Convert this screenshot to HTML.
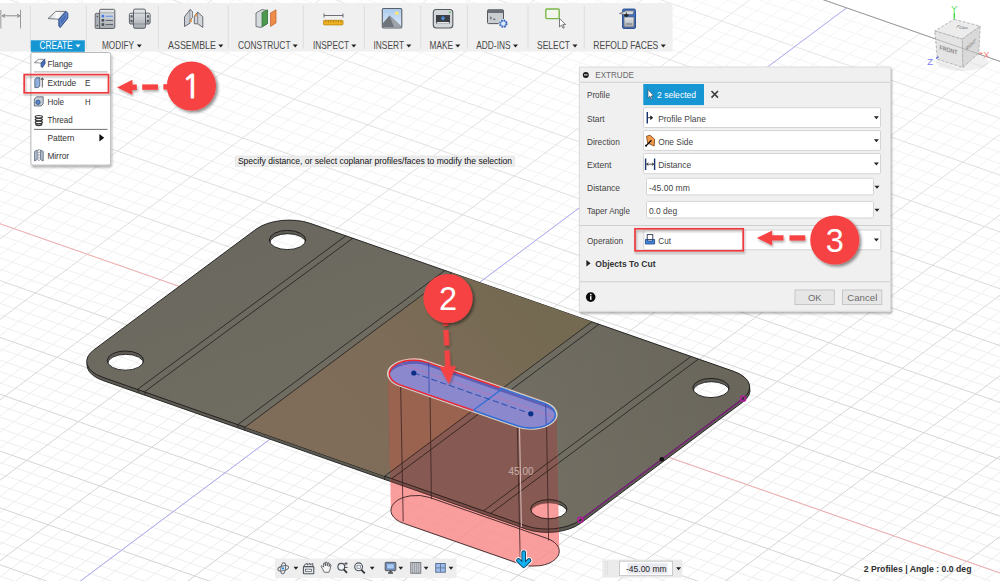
<!DOCTYPE html>
<html><head><meta charset="utf-8"><title>Extrude cut</title>
<style>
html,body{margin:0;padding:0;background:#fff;overflow:hidden}
svg{display:block;font-family:"Liberation Sans",sans-serif}
</style></head><body>
<svg width="1000" height="581" viewBox="0 0 1000 581">
<rect width="1000" height="581" fill="#ffffff"/>
<g stroke="#ededed" stroke-width="1" fill="none"><path d="M-1356.34 545.82 L-164.94 -345.43"/><path d="M-1360.64 532.95 L691.76 1249.75"/><path d="M-1341.68 550.94 L-150.28 -340.31"/><path d="M-1350.28 525.2 L702.12 1242"/><path d="M-1327.02 556.06 L-135.62 -335.19"/><path d="M-1339.92 517.45 L712.48 1234.25"/><path d="M-1312.36 561.18 L-120.96 -330.07"/><path d="M-1329.56 509.7 L722.84 1226.5"/><path d="M-1283.04 571.42 L-91.64 -319.83"/><path d="M-1308.84 494.2 L743.56 1211"/><path d="M-1268.38 576.54 L-76.98 -314.71"/><path d="M-1298.48 486.45 L753.92 1203.25"/><path d="M-1253.72 581.66 L-62.32 -309.59"/><path d="M-1288.12 478.7 L764.28 1195.5"/><path d="M-1239.06 586.78 L-47.66 -304.47"/><path d="M-1277.76 470.95 L774.64 1187.75"/><path d="M-1209.74 597.02 L-18.34 -294.23"/><path d="M-1257.04 455.45 L795.36 1172.25"/><path d="M-1195.08 602.14 L-3.68 -289.11"/><path d="M-1246.68 447.7 L805.72 1164.5"/><path d="M-1180.42 607.26 L10.98 -283.99"/><path d="M-1236.32 439.95 L816.08 1156.75"/><path d="M-1165.76 612.38 L25.64 -278.87"/><path d="M-1225.96 432.2 L826.44 1149"/><path d="M-1136.44 622.62 L54.96 -268.63"/><path d="M-1205.24 416.7 L847.16 1133.5"/><path d="M-1121.78 627.74 L69.62 -263.51"/><path d="M-1194.88 408.95 L857.52 1125.75"/><path d="M-1107.12 632.86 L84.28 -258.39"/><path d="M-1184.52 401.2 L867.88 1118"/><path d="M-1092.46 637.98 L98.94 -253.27"/><path d="M-1174.16 393.45 L878.24 1110.25"/><path d="M-1063.14 648.22 L128.26 -243.03"/><path d="M-1153.44 377.95 L898.96 1094.75"/><path d="M-1048.48 653.34 L142.92 -237.91"/><path d="M-1143.08 370.2 L909.32 1087"/><path d="M-1033.82 658.46 L157.58 -232.79"/><path d="M-1132.72 362.45 L919.68 1079.25"/><path d="M-1019.16 663.58 L172.24 -227.67"/><path d="M-1122.36 354.7 L930.04 1071.5"/><path d="M-989.84 673.82 L201.56 -217.43"/><path d="M-1101.64 339.2 L950.76 1056"/><path d="M-975.18 678.94 L216.22 -212.31"/><path d="M-1091.28 331.45 L961.12 1048.25"/><path d="M-960.52 684.06 L230.88 -207.19"/><path d="M-1080.92 323.7 L971.48 1040.5"/><path d="M-945.86 689.18 L245.54 -202.07"/><path d="M-1070.56 315.95 L981.84 1032.75"/><path d="M-916.54 699.42 L274.86 -191.83"/><path d="M-1049.84 300.45 L1002.56 1017.25"/><path d="M-901.88 704.54 L289.52 -186.71"/><path d="M-1039.48 292.7 L1012.92 1009.5"/><path d="M-887.22 709.66 L304.18 -181.59"/><path d="M-1029.12 284.95 L1023.28 1001.75"/><path d="M-872.56 714.78 L318.84 -176.47"/><path d="M-1018.76 277.2 L1033.64 994"/><path d="M-843.24 725.02 L348.16 -166.23"/><path d="M-998.04 261.7 L1054.36 978.5"/><path d="M-828.58 730.14 L362.82 -161.11"/><path d="M-987.68 253.95 L1064.72 970.75"/><path d="M-813.92 735.26 L377.48 -155.99"/><path d="M-977.32 246.2 L1075.08 963"/><path d="M-799.26 740.38 L392.14 -150.87"/><path d="M-966.96 238.45 L1085.44 955.25"/><path d="M-769.94 750.62 L421.46 -140.63"/><path d="M-946.24 222.95 L1106.16 939.75"/><path d="M-755.28 755.74 L436.12 -135.51"/><path d="M-935.88 215.2 L1116.52 932"/><path d="M-740.62 760.86 L450.78 -130.39"/><path d="M-925.52 207.45 L1126.88 924.25"/><path d="M-725.96 765.98 L465.44 -125.27"/><path d="M-915.16 199.7 L1137.24 916.5"/><path d="M-696.64 776.22 L494.76 -115.03"/><path d="M-894.44 184.2 L1157.96 901"/><path d="M-681.98 781.34 L509.42 -109.91"/><path d="M-884.08 176.45 L1168.32 893.25"/><path d="M-667.32 786.46 L524.08 -104.79"/><path d="M-873.72 168.7 L1178.68 885.5"/><path d="M-652.66 791.58 L538.74 -99.67"/><path d="M-863.36 160.95 L1189.04 877.75"/><path d="M-623.34 801.82 L568.06 -89.43"/><path d="M-842.64 145.45 L1209.76 862.25"/><path d="M-608.68 806.94 L582.72 -84.31"/><path d="M-832.28 137.7 L1220.12 854.5"/><path d="M-594.02 812.06 L597.38 -79.19"/><path d="M-821.92 129.95 L1230.48 846.75"/><path d="M-579.36 817.18 L612.04 -74.07"/><path d="M-811.56 122.2 L1240.84 839"/><path d="M-550.04 827.42 L641.36 -63.83"/><path d="M-790.84 106.7 L1261.56 823.5"/><path d="M-535.38 832.54 L656.02 -58.71"/><path d="M-780.48 98.95 L1271.92 815.75"/><path d="M-520.72 837.66 L670.68 -53.59"/><path d="M-770.12 91.2 L1282.28 808"/><path d="M-506.06 842.78 L685.34 -48.47"/><path d="M-759.76 83.45 L1292.64 800.25"/><path d="M-476.74 853.02 L714.66 -38.23"/><path d="M-739.04 67.95 L1313.36 784.75"/><path d="M-462.08 858.14 L729.32 -33.11"/><path d="M-728.68 60.2 L1323.72 777"/><path d="M-447.42 863.26 L743.98 -27.99"/><path d="M-718.32 52.45 L1334.08 769.25"/><path d="M-432.76 868.38 L758.64 -22.87"/><path d="M-707.96 44.7 L1344.44 761.5"/><path d="M-403.44 878.62 L787.96 -12.63"/><path d="M-687.24 29.2 L1365.16 746"/><path d="M-388.78 883.74 L802.62 -7.51"/><path d="M-676.88 21.45 L1375.52 738.25"/><path d="M-374.12 888.86 L817.28 -2.39"/><path d="M-666.52 13.7 L1385.88 730.5"/><path d="M-359.46 893.98 L831.94 2.73"/><path d="M-656.16 5.95 L1396.24 722.75"/><path d="M-330.14 904.22 L861.26 12.97"/><path d="M-635.44 -9.55 L1416.96 707.25"/><path d="M-315.48 909.34 L875.92 18.09"/><path d="M-625.08 -17.3 L1427.32 699.5"/><path d="M-300.82 914.46 L890.58 23.21"/><path d="M-614.72 -25.05 L1437.68 691.75"/><path d="M-286.16 919.58 L905.24 28.33"/><path d="M-604.36 -32.8 L1448.04 684"/><path d="M-256.84 929.82 L934.56 38.57"/><path d="M-583.64 -48.3 L1468.76 668.5"/><path d="M-242.18 934.94 L949.22 43.69"/><path d="M-573.28 -56.05 L1479.12 660.75"/><path d="M-227.52 940.06 L963.88 48.81"/><path d="M-562.92 -63.8 L1489.48 653"/><path d="M-212.86 945.18 L978.54 53.93"/><path d="M-552.56 -71.55 L1499.84 645.25"/><path d="M-183.54 955.42 L1007.86 64.17"/><path d="M-531.84 -87.05 L1520.56 629.75"/><path d="M-168.88 960.54 L1022.52 69.29"/><path d="M-521.48 -94.8 L1530.92 622"/><path d="M-154.22 965.66 L1037.18 74.41"/><path d="M-511.12 -102.55 L1541.28 614.25"/><path d="M-139.56 970.78 L1051.84 79.53"/><path d="M-500.76 -110.3 L1551.64 606.5"/><path d="M-110.24 981.02 L1081.16 89.77"/><path d="M-480.04 -125.8 L1572.36 591"/><path d="M-95.58 986.14 L1095.82 94.89"/><path d="M-469.68 -133.55 L1582.72 583.25"/><path d="M-80.92 991.26 L1110.48 100.01"/><path d="M-459.32 -141.3 L1593.08 575.5"/><path d="M-66.26 996.38 L1125.14 105.13"/><path d="M-448.96 -149.05 L1603.44 567.75"/><path d="M-36.94 1006.62 L1154.46 115.37"/><path d="M-428.24 -164.55 L1624.16 552.25"/><path d="M-22.28 1011.74 L1169.12 120.49"/><path d="M-417.88 -172.3 L1634.52 544.5"/><path d="M-7.62 1016.86 L1183.78 125.61"/><path d="M-407.52 -180.05 L1644.88 536.75"/><path d="M7.04 1021.98 L1198.44 130.73"/><path d="M-397.16 -187.8 L1655.24 529"/><path d="M36.36 1032.22 L1227.76 140.97"/><path d="M-376.44 -203.3 L1675.96 513.5"/><path d="M51.02 1037.34 L1242.42 146.09"/><path d="M-366.08 -211.05 L1686.32 505.75"/><path d="M65.68 1042.46 L1257.08 151.21"/><path d="M-355.72 -218.8 L1696.68 498"/><path d="M80.34 1047.58 L1271.74 156.33"/><path d="M-345.36 -226.55 L1707.04 490.25"/><path d="M109.66 1057.82 L1301.06 166.57"/><path d="M-324.64 -242.05 L1727.76 474.75"/><path d="M124.32 1062.94 L1315.72 171.69"/><path d="M-314.28 -249.8 L1738.12 467"/><path d="M138.98 1068.06 L1330.38 176.81"/><path d="M-303.92 -257.55 L1748.48 459.25"/><path d="M153.64 1073.18 L1345.04 181.93"/><path d="M-293.56 -265.3 L1758.84 451.5"/><path d="M182.96 1083.42 L1374.36 192.17"/><path d="M-272.84 -280.8 L1779.56 436"/><path d="M197.62 1088.54 L1389.02 197.29"/><path d="M-262.48 -288.55 L1789.92 428.25"/><path d="M212.28 1093.66 L1403.68 202.41"/><path d="M-252.12 -296.3 L1800.28 420.5"/><path d="M226.94 1098.78 L1418.34 207.53"/><path d="M-241.76 -304.05 L1810.64 412.75"/><path d="M256.26 1109.02 L1447.66 217.77"/><path d="M-221.04 -319.55 L1831.36 397.25"/><path d="M270.92 1114.14 L1462.32 222.89"/><path d="M-210.68 -327.3 L1841.72 389.5"/><path d="M285.58 1119.26 L1476.98 228.01"/><path d="M-200.32 -335.05 L1852.08 381.75"/><path d="M300.24 1124.38 L1491.64 233.13"/><path d="M-189.96 -342.8 L1862.44 374"/><path d="M329.56 1134.62 L1520.96 243.37"/><path d="M344.22 1139.74 L1535.62 248.49"/><path d="M358.88 1144.86 L1550.28 253.61"/><path d="M373.54 1149.98 L1564.94 258.73"/><path d="M402.86 1160.22 L1594.26 268.97"/><path d="M417.52 1165.34 L1608.92 274.09"/><path d="M432.18 1170.46 L1623.58 279.21"/><path d="M446.84 1175.58 L1638.24 284.33"/><path d="M476.16 1185.82 L1667.56 294.57"/><path d="M490.82 1190.94 L1682.22 299.69"/><path d="M505.48 1196.06 L1696.88 304.81"/><path d="M520.14 1201.18 L1711.54 309.93"/><path d="M549.46 1211.42 L1740.86 320.17"/><path d="M564.12 1216.54 L1755.52 325.29"/><path d="M578.78 1221.66 L1770.18 330.41"/><path d="M593.44 1226.78 L1784.84 335.53"/><path d="M622.76 1237.02 L1814.16 345.77"/><path d="M637.42 1242.14 L1828.82 350.89"/><path d="M652.08 1247.26 L1843.48 356.01"/><path d="M666.74 1252.38 L1858.14 361.13"/></g>
<g stroke="#d3d3d3" stroke-width="1" fill="none"><path d="M-1371 540.7 L-179.6 -350.55"/><path d="M-1371 540.7 L681.4 1257.5"/><path d="M-1297.7 566.3 L-106.3 -324.95"/><path d="M-1319.2 501.95 L733.2 1218.75"/><path d="M-1224.4 591.9 L-33 -299.35"/><path d="M-1267.4 463.2 L785 1180"/><path d="M-1151.1 617.5 L40.3 -273.75"/><path d="M-1215.6 424.45 L836.8 1141.25"/><path d="M-1077.8 643.1 L113.6 -248.15"/><path d="M-1163.8 385.7 L888.6 1102.5"/><path d="M-1004.5 668.7 L186.9 -222.55"/><path d="M-1112 346.95 L940.4 1063.75"/><path d="M-931.2 694.3 L260.2 -196.95"/><path d="M-1060.2 308.2 L992.2 1025"/><path d="M-857.9 719.9 L333.5 -171.35"/><path d="M-1008.4 269.45 L1044 986.25"/><path d="M-784.6 745.5 L406.8 -145.75"/><path d="M-956.6 230.7 L1095.8 947.5"/><path d="M-711.3 771.1 L480.1 -120.15"/><path d="M-904.8 191.95 L1147.6 908.75"/><path d="M-638 796.7 L553.4 -94.55"/><path d="M-853 153.2 L1199.4 870"/><path d="M-564.7 822.3 L626.7 -68.95"/><path d="M-801.2 114.45 L1251.2 831.25"/><path d="M-491.4 847.9 L700 -43.35"/><path d="M-749.4 75.7 L1303 792.5"/><path d="M-418.1 873.5 L773.3 -17.75"/><path d="M-697.6 36.95 L1354.8 753.75"/><path d="M-344.8 899.1 L846.6 7.85"/><path d="M-645.8 -1.8 L1406.6 715"/><path d="M-271.5 924.7 L919.9 33.45"/><path d="M-594 -40.55 L1458.4 676.25"/><path d="M-198.2 950.3 L993.2 59.05"/><path d="M-542.2 -79.3 L1510.2 637.5"/><path d="M-124.9 975.9 L1066.5 84.65"/><path d="M-490.4 -118.05 L1562 598.75"/><path d="M-51.6 1001.5 L1139.8 110.25"/><path d="M-438.6 -156.8 L1613.8 560"/><path d="M21.7 1027.1 L1213.1 135.85"/><path d="M-386.8 -195.55 L1665.6 521.25"/><path d="M95 1052.7 L1286.4 161.45"/><path d="M-335 -234.3 L1717.4 482.5"/><path d="M168.3 1078.3 L1359.7 187.05"/><path d="M-283.2 -273.05 L1769.2 443.75"/><path d="M241.6 1103.9 L1433 212.65"/><path d="M-231.4 -311.8 L1821 405"/><path d="M314.9 1129.5 L1506.3 238.25"/><path d="M-179.6 -350.55 L1872.8 366.25"/><path d="M388.2 1155.1 L1579.6 263.85"/><path d="M461.5 1180.7 L1652.9 289.45"/><path d="M534.8 1206.3 L1726.2 315.05"/><path d="M608.1 1231.9 L1799.5 340.65"/><path d="M681.4 1257.5 L1872.8 366.25"/></g>
<defs><linearGradient id="fade" x1="0" y1="0" x2="0" y2="1"><stop offset="0" stop-color="#fff" stop-opacity="0.45"/><stop offset="0.6" stop-color="#fff" stop-opacity="0.12"/><stop offset="1" stop-color="#fff" stop-opacity="0"/></linearGradient></defs>
<rect width="1000" height="581" fill="url(#fade)"/>
<path d="M758.64 -22.87 L1066.5 84.65" stroke="#8e8e8e" stroke-width="0.9" fill="none"/>
<path d="M-59.4 203 L1040.1 587" stroke="#f5b0b0" stroke-width="1" fill="none"/>
<path d="M17.8 627.85 L846.6 7.85" stroke="#adadf7" stroke-width="1" fill="none"/>
<defs>
<linearGradient id="pg" gradientUnits="userSpaceOnUse" x1="300" y1="220" x2="420" y2="540"><stop offset="0" stop-color="#6b685f"/><stop offset="1" stop-color="#747064"/></linearGradient>
<linearGradient id="tg" gradientUnits="userSpaceOnUse" x1="520" y1="290" x2="320" y2="450"><stop offset="0" stop-color="#746951"/><stop offset="0.55" stop-color="#7d6c58"/><stop offset="1" stop-color="#806d59"/></linearGradient>
<clipPath id="plateclip"><path clip-rule="evenodd" d="M94.11 349.67 L256.21 229.07 A38.72 19.86 -1.92 0 1 310.29 223.37 L733.79 371.37 A38.72 19.86 -1.92 0 1 742.29 398.93 L580.09 520.13 A38.72 19.86 -1.92 0 1 526.01 525.83 L102.61 377.23 A38.72 19.86 -1.92 0 1 94.11 349.67 Z M107.2 360.6 a18.2 9.6 0 1 0 36.4 0 a18.2 9.6 0 1 0 -36.4 0 Z M269.3 240 a18.2 9.6 0 1 0 36.4 0 a18.2 9.6 0 1 0 -36.4 0 Z M692.8 388 a18.2 9.6 0 1 0 36.4 0 a18.2 9.6 0 1 0 -36.4 0 Z M530.6 509.2 a18.2 9.6 0 1 0 36.4 0 a18.2 9.6 0 1 0 -36.4 0 Z"/></clipPath>
<clipPath id="platesolid_inv"><path clip-rule="evenodd" d="M0 0 H1000 V581 H0 Z M94.11 349.67 L256.21 229.07 A38.72 19.86 -1.92 0 1 310.29 223.37 L733.79 371.37 A38.72 19.86 -1.92 0 1 742.29 398.93 L580.09 520.13 A38.72 19.86 -1.92 0 1 526.01 525.83 L102.61 377.23 A38.72 19.86 -1.92 0 1 94.11 349.67 Z"/></clipPath>
<clipPath id="platesolid"><path d="M94.11 349.67 L256.21 229.07 A38.72 19.86 -1.92 0 1 310.29 223.37 L733.79 371.37 A38.72 19.86 -1.92 0 1 742.29 398.93 L580.09 520.13 A38.72 19.86 -1.92 0 1 526.01 525.83 L102.61 377.23 A38.72 19.86 -1.92 0 1 94.11 349.67 Z"/></clipPath>
</defs>
<path d="M94.41 352.97 L256.51 232.37 A38.72 19.86 -1.92 0 1 310.59 226.67 L734.09 374.67 A38.72 19.86 -1.92 0 1 742.59 402.23 L580.39 523.43 A38.72 19.86 -1.92 0 1 526.31 529.13 L102.91 380.53 A38.72 19.86 -1.92 0 1 94.41 352.97 Z M107.5 363.9 a18.2 9.6 0 1 0 36.4 0 a18.2 9.6 0 1 0 -36.4 0 Z M269.6 243.3 a18.2 9.6 0 1 0 36.4 0 a18.2 9.6 0 1 0 -36.4 0 Z M693.1 391.3 a18.2 9.6 0 1 0 36.4 0 a18.2 9.6 0 1 0 -36.4 0 Z M530.9 512.5 a18.2 9.6 0 1 0 36.4 0 a18.2 9.6 0 1 0 -36.4 0 Z" fill="#5e5b53" fill-rule="evenodd" stroke="#1c1c1c" stroke-width="0.9"/>
<path d="M94.11 349.67 L256.21 229.07 A38.72 19.86 -1.92 0 1 310.29 223.37 L733.79 371.37 A38.72 19.86 -1.92 0 1 742.29 398.93 L580.09 520.13 A38.72 19.86 -1.92 0 1 526.01 525.83 L102.61 377.23 A38.72 19.86 -1.92 0 1 94.11 349.67 Z M107.2 360.6 a18.2 9.6 0 1 0 36.4 0 a18.2 9.6 0 1 0 -36.4 0 Z M269.3 240 a18.2 9.6 0 1 0 36.4 0 a18.2 9.6 0 1 0 -36.4 0 Z M692.8 388 a18.2 9.6 0 1 0 36.4 0 a18.2 9.6 0 1 0 -36.4 0 Z M530.6 509.2 a18.2 9.6 0 1 0 36.4 0 a18.2 9.6 0 1 0 -36.4 0 Z" fill="url(#pg)" fill-rule="evenodd" stroke="#1a1a1a" stroke-width="0.9"/>
<defs><linearGradient id="dk" gradientUnits="userSpaceOnUse" x1="500" y1="0" x2="760" y2="0"><stop offset="0" stop-color="#000" stop-opacity="0"/><stop offset="1" stop-color="#000" stop-opacity="0.09"/></linearGradient></defs>
<rect x="500" y="250" width="260" height="290" fill="url(#dk)" clip-path="url(#plateclip)"/>
<g clip-path="url(#plateclip)">
<path d="M244.6 427.5 L453.5 271.6 L593.6 320.5 L384.3 476.4 Z" fill="url(#tg)"/>
<path d="M138 389 L347 235" stroke="#1e1e1e" stroke-width="0.8" fill="none"/>
<path d="M145 391.5 L354 237.3" stroke="#1e1e1e" stroke-width="0.8" fill="none"/>
<path d="M237.8 424.6 L446.5 269.2" stroke="#1e1e1e" stroke-width="0.8" fill="none"/>
<path d="M244.6 427.5 L453.5 271.6" stroke="#1e1e1e" stroke-width="0.8" fill="none"/>
<path d="M384.3 476.4 L593.6 320.5" stroke="#1e1e1e" stroke-width="0.8" fill="none"/>
<path d="M391.6 478.8 L600.6 323" stroke="#1e1e1e" stroke-width="0.8" fill="none"/>
<path d="M482 512 L691.6 356" stroke="#1e1e1e" stroke-width="0.8" fill="none"/>
<path d="M489 514.6 L699 358.6" stroke="#1e1e1e" stroke-width="0.8" fill="none"/>
</g>
<path d="M138 389 l0.3 3.3" stroke="#1e1e1e" stroke-width="0.7"/>
<path d="M145 391.5 l0.3 3.3" stroke="#1e1e1e" stroke-width="0.7"/>
<path d="M237.8 424.6 l0.3 3.3" stroke="#1e1e1e" stroke-width="0.7"/>
<path d="M244.6 427.5 l0.3 3.3" stroke="#1e1e1e" stroke-width="0.7"/>
<path d="M384.3 476.4 l0.3 3.3" stroke="#1e1e1e" stroke-width="0.7"/>
<path d="M391.6 478.8 l0.3 3.3" stroke="#1e1e1e" stroke-width="0.7"/>
<path d="M482 512 l0.3 3.3" stroke="#1e1e1e" stroke-width="0.7"/>
<path d="M489 514.6 l0.3 3.3" stroke="#1e1e1e" stroke-width="0.7"/>
<path d="M580.5 519.8 L743.1 398.7" stroke="#861c88" stroke-width="1.1" fill="none"/>
<circle cx="580.5" cy="519.8" r="2.6" fill="none" stroke="#b5179e" stroke-width="1.4"/><circle cx="580.5" cy="519.8" r="0.9" fill="#3a1a3a"/>
<circle cx="743.1" cy="398.7" r="2.6" fill="none" stroke="#b5179e" stroke-width="1.4"/><circle cx="743.1" cy="398.7" r="0.9" fill="#3a1a3a"/>
<circle cx="661.8" cy="459.2" r="2.3" fill="#111"/>
<defs><clipPath id="silclip"><path d="M426.98 360.12 L543.98 400.92 A25.7 15 0 0 1 556.5 413.8 L559.3 551.2 A25.7 15 0 0 1 520.42 564.08 L403.42 523.28 A25.7 15 0 0 1 390.9 510.4 L388.1 373 A25.7 15 0 0 1 426.98 360.12 Z"/></clipPath></defs>
<path d="M426.98 360.12 L543.98 400.92 A25.7 15 0 0 1 556.5 413.8 L559.3 551.2 A25.7 15 0 0 1 520.42 564.08 L403.42 523.28 A25.7 15 0 0 1 390.9 510.4 L388.1 373 A25.7 15 0 0 1 426.98 360.12 Z" fill="#f98585" fill-opacity="0.8"/>
<g clip-path="url(#silclip)"><path d="M94.41 352.97 L256.51 232.37 A38.72 19.86 -1.92 0 1 310.59 226.67 L734.09 374.67 A38.72 19.86 -1.92 0 1 742.59 402.23 L580.39 523.43 A38.72 19.86 -1.92 0 1 526.31 529.13 L102.91 380.53 A38.72 19.86 -1.92 0 1 94.41 352.97 Z M107.5 363.9 a18.2 9.6 0 1 0 36.4 0 a18.2 9.6 0 1 0 -36.4 0 Z M269.6 243.3 a18.2 9.6 0 1 0 36.4 0 a18.2 9.6 0 1 0 -36.4 0 Z M693.1 391.3 a18.2 9.6 0 1 0 36.4 0 a18.2 9.6 0 1 0 -36.4 0 Z M530.9 512.5 a18.2 9.6 0 1 0 36.4 0 a18.2 9.6 0 1 0 -36.4 0 Z" fill="#7a4f49" fill-rule="evenodd"/>
<path d="M94.11 349.67 L256.21 229.07 A38.72 19.86 -1.92 0 1 310.29 223.37 L733.79 371.37 A38.72 19.86 -1.92 0 1 742.29 398.93 L580.09 520.13 A38.72 19.86 -1.92 0 1 526.01 525.83 L102.61 377.23 A38.72 19.86 -1.92 0 1 94.11 349.67 Z M107.2 360.6 a18.2 9.6 0 1 0 36.4 0 a18.2 9.6 0 1 0 -36.4 0 Z M269.3 240 a18.2 9.6 0 1 0 36.4 0 a18.2 9.6 0 1 0 -36.4 0 Z M692.8 388 a18.2 9.6 0 1 0 36.4 0 a18.2 9.6 0 1 0 -36.4 0 Z M530.6 509.2 a18.2 9.6 0 1 0 36.4 0 a18.2 9.6 0 1 0 -36.4 0 Z" fill="#865a52" fill-rule="evenodd"/>
<path d="M244.6 427.5 L453.5 271.6 L593.6 320.5 L384.3 476.4 Z" fill="#9a6350" clip-path="url(#plateclip)"/>
<g clip-path="url(#plateclip)">
<path d="M237.8 424.6 L446.5 269.2" stroke="#2a1a18" stroke-width="0.8" fill="none"/>
<path d="M244.6 427.5 L453.5 271.6" stroke="#2a1a18" stroke-width="0.8" fill="none"/>
<path d="M384.3 476.4 L593.6 320.5" stroke="#2a1a18" stroke-width="0.8" fill="none"/>
<path d="M391.6 478.8 L600.6 323" stroke="#2a1a18" stroke-width="0.8" fill="none"/>
<path d="M482 512 L691.6 356" stroke="#2a1a18" stroke-width="0.8" fill="none"/>
<path d="M489 514.6 L699 358.6" stroke="#2a1a18" stroke-width="0.8" fill="none"/>
</g>
<path d="M94.11 349.67 L256.21 229.07 A38.72 19.86 -1.92 0 1 310.29 223.37 L733.79 371.37 A38.72 19.86 -1.92 0 1 742.29 398.93 L580.09 520.13 A38.72 19.86 -1.92 0 1 526.01 525.83 L102.61 377.23 A38.72 19.86 -1.92 0 1 94.11 349.67 Z M107.2 360.6 a18.2 9.6 0 1 0 36.4 0 a18.2 9.6 0 1 0 -36.4 0 Z M269.3 240 a18.2 9.6 0 1 0 36.4 0 a18.2 9.6 0 1 0 -36.4 0 Z M692.8 388 a18.2 9.6 0 1 0 36.4 0 a18.2 9.6 0 1 0 -36.4 0 Z M530.6 509.2 a18.2 9.6 0 1 0 36.4 0 a18.2 9.6 0 1 0 -36.4 0 Z" fill="none" stroke="#2a1a18" stroke-width="0.9"/>
<path d="M94.41 352.97 L256.51 232.37 A38.72 19.86 -1.92 0 1 310.59 226.67 L734.09 374.67 A38.72 19.86 -1.92 0 1 742.59 402.23 L580.39 523.43 A38.72 19.86 -1.92 0 1 526.31 529.13 L102.91 380.53 A38.72 19.86 -1.92 0 1 94.41 352.97 Z" fill="none" stroke="#2a1a18" stroke-width="0.7" clip-path="url(#platesolid_inv)"/>
</g>
<path d="M429.78 497.52 L546.78 538.32 A25.7 15 0 0 1 520.42 564.08 L403.42 523.28 A25.7 15 0 0 1 429.78 497.52 Z" fill="none" stroke="#3a2222" stroke-width="0.9"/>
<path d="M400.6 384.5 L403.2 521.5" stroke="#3a2222" stroke-width="0.8" fill="none"/>
<path d="M429.6 361.5 L431.4 499" stroke="#3a2222" stroke-width="0.8" fill="none"/>
<path d="M517.3 426 L520.3 563" stroke="#3a2222" stroke-width="0.8" fill="none"/>
<path d="M546.2 403.5 L548.6 540.5" stroke="#3a2222" stroke-width="0.8" fill="none"/>
<path d="M519.5 426 L521.4 527" stroke="#e3c6c4" stroke-width="0.9" fill="none"/>
<defs><clipPath id="slotclip"><path d="M427.52 361.69 L544.52 402.49 A25.7 14.2 0 0 1 517.08 426.51 L400.08 385.71 A25.7 14.2 0 0 1 427.52 361.69 Z"/></clipPath></defs>
<path d="M427.52 361.69 L544.52 402.49 A25.7 14.2 0 0 1 517.08 426.51 L400.08 385.71 A25.7 14.2 0 0 1 427.52 361.69 Z" fill="#5f5fb6" stroke="#d4cdc2" stroke-width="2.2"/>
<g clip-path="url(#slotclip)"><path d="M427.82 365.99 L544.82 406.79 A25.7 14.2 0 0 1 517.38 430.81 L400.38 390.01 A25.7 14.2 0 0 1 427.82 365.99 Z" fill="#8c88ce"/>
<path d="M-59.4 203 L1040.1 587" stroke="#e06a9a" stroke-width="0.8" opacity="0.55" fill="none"/>
</g>
<defs><clipPath id="sl"><path d="M380 340 L503 385 L473 411 L380 440 Z"/></clipPath><clipPath id="sr"><path d="M570 340 L503 385 L473 411 L570 450 Z"/></clipPath></defs>
<path d="M426.83 362.29 L543.83 403.09 A24.41 13.49 0 0 1 517.77 425.91 L400.77 385.11 A24.41 13.49 0 0 1 426.83 362.29 Z" fill="none" stroke="#f0262c" stroke-width="1.4" clip-path="url(#sl)"/>
<path d="M426.83 362.29 L543.83 403.09 A24.41 13.49 0 0 1 517.77 425.91 L400.77 385.11 A24.41 13.49 0 0 1 426.83 362.29 Z" fill="none" stroke="#2d6fd6" stroke-width="1.3" clip-path="url(#sr)"/>
<path d="M503 388.2 L474 409.8" stroke="#2d6fd6" stroke-width="1.3" fill="none"/>
<path d="M428.7 362.5 L429.2 393" stroke="#2c46ae" stroke-width="0.8" fill="none"/>
<path d="M545.6 404 L546.2 424.5" stroke="#2c46ae" stroke-width="0.8" fill="none"/>
<path d="M413.8 373 L530.8 413.8" stroke="#3555ae" stroke-width="1.1" stroke-dasharray="6.2 3.1" fill="none"/>
<circle cx="413.8" cy="373" r="2.6" fill="#0b2f86"/>
<circle cx="530.8" cy="413.8" r="2.6" fill="#0b2f86"/>
<text x="508.5" y="475" font-size="10.5" fill="#c9b0ac" textLength="25" lengthAdjust="spacingAndGlyphs" >45.00</text>
<path d="M523.7 552.6 V565 M518.4 560.4 L523.7 565.7 L529.1 560.4" fill="none" stroke="#ffffff" stroke-width="6.4" stroke-linecap="round" stroke-linejoin="round" opacity="0.9"/>
<path d="M523.7 552.6 V565 M518.4 560.4 L523.7 565.7 L529.1 560.4" fill="none" stroke="#0c4468" stroke-width="4.6" stroke-linecap="round" stroke-linejoin="round"/>
<path d="M523.7 552.6 V565 M518.4 560.4 L523.7 565.7 L529.1 560.4" fill="none" stroke="#12b2f2" stroke-width="2.7" stroke-linecap="round" stroke-linejoin="round"/>
<defs>
<filter id="sh" x="-30%" y="-30%" width="170%" height="170%"><feGaussianBlur in="SourceAlpha" stdDeviation="1.6"/><feOffset dx="1.5" dy="2"/><feComponentTransfer><feFuncA type="linear" slope="0.45"/></feComponentTransfer><feMerge><feMergeNode/><feMergeNode in="SourceGraphic"/></feMerge></filter>
<filter id="sh2" x="-10%" y="-10%" width="125%" height="125%"><feGaussianBlur in="SourceAlpha" stdDeviation="1.3"/><feOffset dx="1" dy="1.5"/><feComponentTransfer><feFuncA type="linear" slope="0.3"/></feComponentTransfer><feMerge><feMergeNode/><feMergeNode in="SourceGraphic"/></feMerge></filter>
<linearGradient id="fl" x1="0" y1="0" x2="1" y2="0"><stop offset="0" stop-color="#c4c8cc"/><stop offset="0.5" stop-color="#fdfdfd"/><stop offset="1" stop-color="#cfd2d6"/></linearGradient><linearGradient id="sky" x1="0" y1="0" x2="0" y2="1"><stop offset="0" stop-color="#a9c9ee"/><stop offset="1" stop-color="#e4eefa"/></linearGradient><linearGradient id="met" x1="0" y1="0" x2="0" y2="1"><stop offset="0" stop-color="#e6e8ea"/><stop offset="1" stop-color="#a6abb1"/></linearGradient>
</defs>
<g>
<ellipse cx="962" cy="62" rx="26" ry="9" fill="#000" opacity="0.06"/>
<path d="M954 19.3 L980.2 26.1 L962.3 39.2 L934.8 31 Z" fill="#ececec" stroke="#a8a8a8" stroke-width="0.8" stroke-dasharray="3 1.5"/>
<path d="M934.8 31 L962.3 39.2 L963 67.4 L937.5 59.2 Z" fill="#e4e4e4" stroke="#a8a8a8" stroke-width="0.8" stroke-dasharray="3 1.5"/>
<path d="M962.3 39.2 L980.2 26.1 L978.8 53 L963 67.4 Z" fill="#d9d9d9" stroke="#a8a8a8" stroke-width="0.8" stroke-dasharray="3 1.5"/>
<text x="0" y="0" font-size="6.5" fill="#8a8a8a" textLength="18" lengthAdjust="spacingAndGlyphs" font-weight="bold" transform="matrix(1 0.3 0 1 939.5 49.5)">FRONT</text>
<text x="0" y="0" font-size="6" fill="#8f8f8f" textLength="11" lengthAdjust="spacingAndGlyphs" font-weight="bold" transform="matrix(1 0.28 -0.6 0.5 955 27)">TOP</text>
<text x="0" y="0" font-size="6" fill="#8f8f8f" textLength="13" lengthAdjust="spacingAndGlyphs" font-weight="bold" transform="matrix(0.75 -0.65 0 1 966 51)">RIGHT</text>
<path d="M954.3 12.5 V18.8" stroke="#3ddc3d" stroke-width="1.4"/>
<text x="951" y="12" font-size="9.5" fill="#55e455" >Y</text>
<path d="M936 58.5 L938.5 56.8" stroke="#5555ee" stroke-width="1.2"/>
<text x="927.3" y="65.2" font-size="9.5" fill="#7a7af5" >Z</text>
<path d="M979.5 52.8 L982.5 53.5" stroke="#f26a6a" stroke-width="1.2"/>
<text x="983.2" y="57.8" font-size="9.5" fill="#f58a8a" >X</text>
</g>
<path d="M935.29 38.83 L980.74 54.7" stroke="#8a8a8a" stroke-width="0.9" fill="none" opacity="0.55"/>
<rect x="0" y="3" width="672.5" height="48.5" fill="#f0f0f0"/>
<rect x="29.8" y="5.5" width="1" height="43" fill="#dcdcdc"/>
<rect x="85.8" y="5.5" width="1" height="43" fill="#dcdcdc"/>
<rect x="157.8" y="5.5" width="1" height="43" fill="#dcdcdc"/>
<rect x="227.7" y="5.5" width="1" height="43" fill="#dcdcdc"/>
<rect x="302.8" y="5.5" width="1" height="43" fill="#dcdcdc"/>
<rect x="363.8" y="5.5" width="1" height="43" fill="#dcdcdc"/>
<rect x="420.3" y="5.5" width="1" height="43" fill="#dcdcdc"/>
<rect x="466.9" y="5.5" width="1" height="43" fill="#dcdcdc"/>
<rect x="527.5" y="5.5" width="1" height="43" fill="#dcdcdc"/>
<rect x="583.8" y="5.5" width="1" height="43" fill="#dcdcdc"/>
<rect x="30.8" y="40.3" width="54" height="11.5" fill="#1796d4"/>
<text x="39.6" y="49.3" font-size="10.3" fill="#ffffff" textLength="33" lengthAdjust="spacingAndGlyphs" >CREATE</text>
<path d="M75.5 44.4 h5 l-2.5 3 z" fill="#fff"/>
<text x="102" y="49.3" font-size="10.3" fill="#4a4a4a" textLength="32" lengthAdjust="spacingAndGlyphs" >MODIFY</text>
<path d="M136.8 44.4 h5 l-2.5 3 z" fill="#222"/>
<text x="168" y="49.3" font-size="10.3" fill="#4a4a4a" textLength="48" lengthAdjust="spacingAndGlyphs" >ASSEMBLE</text>
<path d="M218.3 44.4 h5 l-2.5 3 z" fill="#222"/>
<text x="238" y="49.3" font-size="10.3" fill="#4a4a4a" textLength="52.5" lengthAdjust="spacingAndGlyphs" >CONSTRUCT</text>
<path d="M292.7 44.4 h5 l-2.5 3 z" fill="#222"/>
<text x="313" y="49.3" font-size="10.3" fill="#4a4a4a" textLength="36" lengthAdjust="spacingAndGlyphs" >INSPECT</text>
<path d="M351.3 44.4 h5 l-2.5 3 z" fill="#222"/>
<text x="373.5" y="49.3" font-size="10.3" fill="#4a4a4a" textLength="30.5" lengthAdjust="spacingAndGlyphs" >INSERT</text>
<path d="M406.3 44.4 h5 l-2.5 3 z" fill="#222"/>
<text x="429.5" y="49.3" font-size="10.3" fill="#4a4a4a" textLength="23.5" lengthAdjust="spacingAndGlyphs" >MAKE</text>
<path d="M455.3 44.4 h5 l-2.5 3 z" fill="#222"/>
<text x="476.3" y="49.3" font-size="10.3" fill="#4a4a4a" textLength="34.2" lengthAdjust="spacingAndGlyphs" >ADD-INS</text>
<path d="M513 44.4 h5 l-2.5 3 z" fill="#222"/>
<text x="537" y="49.3" font-size="10.3" fill="#4a4a4a" textLength="33" lengthAdjust="spacingAndGlyphs" >SELECT</text>
<path d="M572.5 44.4 h5 l-2.5 3 z" fill="#222"/>
<text x="593.3" y="49.3" font-size="10.3" fill="#4a4a4a" textLength="65" lengthAdjust="spacingAndGlyphs" >REFOLD FACES</text>
<path d="M660.8 44.4 h5 l-2.5 3 z" fill="#222"/>
<rect x="0" y="10" width="1.5" height="18.5" fill="#b5b5b5"/>
<rect x="20" y="9.8" width="1" height="18.6" fill="#9a9a9a"/>
<path d="M2 15.8 H20 M2 15.8 l3 -1.6 M2 15.8 l3 1.6 M20 15.8 l-3 -1.6 M20 15.8 l-3 1.6" stroke="#8c8c8c" stroke-width="1" fill="none"/>
<path d="M48 18.6 L55.8 11.4 L66 11.4 L58.8 19.2 Z" fill="url(#fl)" stroke="#6b6f75" stroke-width="0.9" stroke-linejoin="round"/>
<path d="M58.8 19.2 L66 11.4 L67.8 13.2 L67.8 18.2 L60.2 27.6 L58.8 25.8 Z" fill="#4a6fb5" stroke="#2c4a86" stroke-width="0.9" stroke-linejoin="round"/>
<path d="M60 20 L66.6 12.8 V17.8 L60.4 25.6 Z" fill="none" stroke="#7f9fdc" stroke-width="0.6"/>
<rect x="95.2" y="13.3" width="6" height="15.2" rx="1" fill="#a9aeb4" stroke="#5b6066" stroke-width="0.9"/>
<rect x="99.6" y="9.3" width="15.2" height="19.2" rx="1.3" fill="url(#met)" stroke="#5b6066" stroke-width="1"/>
<path d="M100.2 12.9 H114.3" stroke="#8a9097" stroke-width="0.7"/>
<circle cx="97.3" cy="16.6" r="0.7" fill="#3a3e44"/><circle cx="97.3" cy="25.4" r="0.7" fill="#3a3e44"/>
<rect x="101.6" y="14.8" width="2.6" height="2.6" fill="#3d7be0"/><rect x="101.6" y="19" width="2.6" height="2.6" fill="#4a4f55"/><rect x="101.6" y="23.2" width="2.6" height="2.6" fill="#4a4f55"/>
<path d="M105.6 16.2 H113" stroke="#4d8be8" stroke-width="1"/><path d="M105.6 20.4 H113 M105.6 24.6 H113" stroke="#5b6066" stroke-width="1"/>
<rect x="129.4" y="13.2" width="20.7" height="10.8" rx="1.4" fill="url(#met)" stroke="#5b6066" stroke-width="1"/>
<rect x="133.5" y="9.1" width="12" height="19.2" rx="1.6" fill="url(#met)" stroke="#5b6066" stroke-width="1"/>
<path d="M134 13.2 H145 M134 24 H145" stroke="#7b8087" stroke-width="0.7"/>
<rect x="130.6" y="15.2" width="2" height="2.4" fill="#555a60"/><rect x="130.6" y="19.8" width="2" height="2.4" fill="#555a60"/><rect x="146.9" y="15.2" width="2" height="2.4" fill="#555a60"/><rect x="146.9" y="19.8" width="2" height="2.4" fill="#555a60"/>
<path d="M184.5 26.5 V16.8 L190 9.6 L192.2 11.3 V17.6 L190 20.2 V23.2 Z" fill="#c9ced4" stroke="#5b6066" stroke-width="0.9" stroke-linejoin="round"/>
<path d="M190 9.6 L192.2 11.3 V17.6 L190 20.2 Z" fill="#eceef0" stroke="#5b6066" stroke-width="0.6" stroke-linejoin="round"/>
<path d="M194.3 16.3 L197.7 12.1 L202.8 16.8 V27.4 L197.7 23.8 H194.3 Z" fill="#d3d7dc" stroke="#5b6066" stroke-width="0.9" stroke-linejoin="round"/>
<path d="M197.7 12.1 V23.8" stroke="#5b6066" stroke-width="0.7"/>
<rect x="195" y="13.8" width="1.5" height="2.8" fill="#f08a2a"/><rect x="190.3" y="19.2" width="1.5" height="2.8" fill="#f08a2a"/>
<path d="M256 13 L262 9.5 L267 10.5 L267 24 L261 27.5 L256 26.5 Z" fill="#d8dbde" stroke="#6a6f75" stroke-width="0.9" stroke-linejoin="round"/>
<path d="M262 12.5 L267.5 9.8 L267.5 23.5 L262 26.8 Z" fill="#4c9a50" stroke="#2f6e33" stroke-width="0.7"/>
<path d="M270.5 13 L276 9.8 L276 23 L270.5 26.5 Z" fill="#f08c4a" stroke="#b8622a" stroke-width="0.7"/>
<path d="M324 15.5 H343 M324 13.5 V17.5 M343 13.5 V17.5" stroke="#6a6f75" stroke-width="1" fill="none"/>
<rect x="323.5" y="20.3" width="19.5" height="4.6" rx="0.8" fill="#f0b323" stroke="#b8860b" stroke-width="0.8"/>
<path d="M326 20.5 v2 M328.5 20.5 v2 M331 20.5 v2 M333.5 20.5 v2 M336 20.5 v2 M338.5 20.5 v2 M341 20.5 v2" stroke="#8a6508" stroke-width="0.6"/>
<rect x="382.3" y="8.5" width="19.5" height="19.5" rx="1.2" fill="url(#sky)" stroke="#5b6066" stroke-width="1.1"/>
<path d="M383 27.3 V23 L389.5 15.5 L401 26 V27.3 Z" fill="#6f747b"/><path d="M389.5 15.5 L401 26 V27.3 H394 Z" fill="#9ea3aa"/>
<circle cx="396.8" cy="13.2" r="1.9" fill="#f6e37a"/>
<rect x="433.3" y="9.5" width="19.5" height="18.5" rx="3" fill="#d4d7da" stroke="#55595e" stroke-width="1.1"/>
<rect x="436" y="15" width="14" height="8.5" fill="#3c4046"/>
<path d="M437.5 22 h11 l1.5 1.5 h-14 z" fill="#e8eaec"/>
<path d="M443 16 v3.2 m-1.8 -1.6 l1.8 2 l1.8 -2" stroke="#4d9bf0" stroke-width="1.1" fill="none"/>
<circle cx="449.8" cy="12.3" r="0.9" fill="#46c046"/>
<rect x="487.5" y="9.8" width="16" height="13.8" rx="1" fill="#c9cdd1" stroke="#55595e" stroke-width="1"/>
<rect x="487.5" y="9.8" width="16" height="3.2" fill="#6a6f75"/>
<path d="M490 16.8 l1.6 1.2 l-1.6 1.2 M493 19.2 h2.4" stroke="#3a3e44" stroke-width="0.8" fill="none"/>
<circle cx="503.3" cy="23.6" r="4.6" fill="#f0f0f0"/><circle cx="503.3" cy="23.6" r="3.5" fill="#dfe9f8" stroke="#2f62b8" stroke-width="1.5" stroke-dasharray="1.7 1.05"/><circle cx="503.3" cy="23.6" r="2.6" fill="none" stroke="#3f74cc" stroke-width="0.8"/>
<rect x="545.8" y="9" width="13.4" height="9.6" rx="1" fill="#f3f6ee" stroke="#7ab648" stroke-width="1.4"/>
<path d="M559.5 18.5 L559.5 27 L561.6 25 L563 28.2 L564.3 27.6 L562.9 24.6 L565.6 24.5 Z" fill="#fff" stroke="#55595e" stroke-width="0.8" stroke-linejoin="round"/>
<rect x="622.5" y="9" width="13" height="19.5" rx="1.5" fill="#3f6fc4" stroke="#274a8a" stroke-width="0.9"/>
<rect x="624" y="17" width="10" height="10" rx="0.8" fill="url(#met)" stroke="#5b6066" stroke-width="0.7"/>
<path d="M619.5 13.5 L626 10.8 H634 L633 14.5 H624 Z" fill="#d5d9dd" stroke="#5b6066" stroke-width="0.7"/>
<path d="M626.3 12.5 v3.2 m-2 -0.8 l2 2.2 l2 -2.2 z" fill="#222" stroke="#222" stroke-width="0.9"/>
<path d="M626 24 h6" stroke="#5b6066" stroke-width="0.8"/>
<g filter="url(#sh2)"><rect x="30.9" y="52.5" width="79.8" height="112.6" rx="2" fill="#ffffff" stroke="#b9b9b9" stroke-width="1"/></g>
<path d="M34 71.9 H107.5" stroke="#9a9a9a" stroke-width="0.8"/><path d="M34 129.4 H107.5" stroke="#5f5f5f" stroke-width="0.9"/>
<text x="47.4" y="66.6" font-size="9.8" fill="#333" textLength="25.3" lengthAdjust="spacingAndGlyphs" >Flange</text>
<text x="47.4" y="85.9" font-size="9.8" fill="#333" textLength="28.8" lengthAdjust="spacingAndGlyphs" >Extrude</text>
<text x="47.4" y="104.8" font-size="9.8" fill="#333" textLength="16.5" lengthAdjust="spacingAndGlyphs" >Hole</text>
<text x="47.4" y="123.4" font-size="9.8" fill="#333" textLength="25.3" lengthAdjust="spacingAndGlyphs" >Thread</text>
<text x="47.4" y="141.2" font-size="9.8" fill="#333" textLength="27.1" lengthAdjust="spacingAndGlyphs" >Pattern</text>
<text x="47.4" y="158.5" font-size="9.8" fill="#333" textLength="21.6" lengthAdjust="spacingAndGlyphs" >Mirror</text>
<text x="85" y="85.9" font-size="9.8" fill="#333" textLength="5.4" lengthAdjust="spacingAndGlyphs" >E</text>
<text x="85" y="104.8" font-size="9.8" fill="#333" textLength="5.6" lengthAdjust="spacingAndGlyphs" >H</text>
<path d="M99.4 134 L104.2 137.8 L99.4 141.6 Z" fill="#111"/>
<path d="M34.2 62.7 L38.5 59.3 L44.8 59.3 L41 63.1 Z" fill="url(#fl)" stroke="#6b6f75" stroke-width="0.7" stroke-linejoin="round"/><path d="M41 63.1 L44.8 59.3 L45.2 63.4 L42.3 67.8 L41 66.4 Z" fill="#4a6fb5" stroke="#2c4a86" stroke-width="0.7" stroke-linejoin="round"/>
<path d="M34.8 79.5 L36.3 77.8 H39.8 V86 L38.3 87.6 H34.8 Z" fill="#8fb0dd" stroke="#4c5a70" stroke-width="0.8" stroke-linejoin="round"/><path d="M42.3 87.5 V78.2 M40.9 80 L42.3 77.8 L43.7 80" stroke="#333" stroke-width="0.8" fill="none"/>
<path d="M34.3 99 L36.5 96.8 H43.2 V103.8 L41 106 H34.3 Z" fill="#c6ccd3" stroke="#4c5a70" stroke-width="0.8" stroke-linejoin="round"/><circle cx="38" cy="102.3" r="2.2" fill="#5a86c8" stroke="#2c4a86" stroke-width="0.7"/>
<g fill="none" stroke="#3a3a3a" stroke-width="1.2"><ellipse cx="38.8" cy="116.8" rx="3.6" ry="1.3"/><ellipse cx="38.8" cy="119.6" rx="3.6" ry="1.3"/><ellipse cx="38.8" cy="122.4" rx="3.6" ry="1.3"/><ellipse cx="38.8" cy="124.6" rx="3" ry="1"/></g>
<path d="M34.6 151.5 l2.6 -1.5 v9.5 l-2.6 1.4 z M43.2 151.5 l-2.6 -1.5 v9.5 l2.6 1.4 z" fill="#b9c6d8" stroke="#3d4a60" stroke-width="0.7"/><path d="M38.9 149 v12.5" stroke="#3d4a60" stroke-width="0.8" stroke-dasharray="1.6 1"/>
<g filter="url(#sh2)"><rect x="24.2" y="74.6" width="84.3" height="18.2" fill="none" stroke="#ee3a3d" stroke-width="1.7"/></g>
<rect x="235.5" y="156" width="279" height="10.4" fill="#ededed" stroke="#e2e2e2" stroke-width="0.6"/>
<text x="237.9" y="164" font-size="9" fill="#111" textLength="274.2" lengthAdjust="spacingAndGlyphs" >Specify distance, or select coplanar profiles/faces to modify the selection</text>
<g filter="url(#sh2)"><rect x="579.5" y="67" width="311" height="244.2" fill="#f0f0f0" stroke="#dcdcdc" stroke-width="1"/></g>
<path d="M580 82.2 H890 M580 225.5 H890 M580 281.7 H890" stroke="#cfcfcf" stroke-width="1.1"/>
<circle cx="585.8" cy="74.9" r="3" fill="#1a1a1a"/><rect x="584" y="74.4" width="3.6" height="1" fill="#fff"/>
<text x="595.3" y="78.3" font-size="9.6" fill="#6a6a6a" textLength="38.6" lengthAdjust="spacingAndGlyphs" >EXTRUDE</text>
<text x="587" y="98.3" font-size="9.6" fill="#444" textLength="22.9" lengthAdjust="spacingAndGlyphs" >Profile</text>
<text x="587" y="121.5" font-size="9.6" fill="#444" textLength="17.6" lengthAdjust="spacingAndGlyphs" >Start</text>
<text x="587" y="144.7" font-size="9.6" fill="#444" textLength="32.8" lengthAdjust="spacingAndGlyphs" >Direction</text>
<text x="587" y="167.9" font-size="9.6" fill="#444" textLength="24.5" lengthAdjust="spacingAndGlyphs" >Extent</text>
<text x="587" y="191" font-size="9.6" fill="#444" textLength="33.1" lengthAdjust="spacingAndGlyphs" >Distance</text>
<text x="587" y="214" font-size="9.6" fill="#444" textLength="42.9" lengthAdjust="spacingAndGlyphs" >Taper Angle</text>
<text x="587" y="243.9" font-size="9.6" fill="#444" textLength="36" lengthAdjust="spacingAndGlyphs" >Operation</text>
<rect x="643.3" y="84" width="60.7" height="21.1" fill="#1796d4"/>
<path d="M648 89.6 V98 L650 96.3 L651.3 99.2 L652.4 98.7 L651.2 95.9 L653.6 95.7 Z" fill="#fff" stroke="#33414d" stroke-width="0.6" stroke-linejoin="round"/>
<text x="657" y="98.3" font-size="9.6" fill="#ffffff" textLength="39.1" lengthAdjust="spacingAndGlyphs" >2 selected</text>
<path d="M711.5 91 L718 97.6 M718 91 L711.5 97.6" stroke="#3a3a3a" stroke-width="1.5" fill="none"/>
<rect x="643.5" y="107.7" width="237" height="19.8" rx="1.2" fill="#ffffff" stroke="#d4d4d4" stroke-width="1"/>
<path d="M873.9 116.3 h5 l-2.5 3 z" fill="#222"/>
<rect x="643.5" y="130.6" width="237" height="19.8" rx="1.2" fill="#ffffff" stroke="#d4d4d4" stroke-width="1"/>
<path d="M873.9 139.3 h5 l-2.5 3 z" fill="#222"/>
<rect x="643.5" y="153.5" width="237" height="20.2" rx="1.2" fill="#ffffff" stroke="#d4d4d4" stroke-width="1"/>
<path d="M873.9 162.5 h5 l-2.5 3 z" fill="#222"/>
<rect x="646.5" y="178.3" width="227" height="16.6" rx="1.2" fill="#ffffff" stroke="#d4d4d4" stroke-width="1"/>
<path d="M874.5 185.8 h5 l-2.5 3 z" fill="#222"/>
<rect x="646.5" y="201.4" width="227" height="16.6" rx="1.2" fill="#ffffff" stroke="#d4d4d4" stroke-width="1"/>
<path d="M874.5 208.8 h5 l-2.5 3 z" fill="#222"/>
<rect x="643.8" y="230" width="237" height="19.8" rx="1.2" fill="#ffffff" stroke="#d4d4d4" stroke-width="1"/>
<path d="M873.9 238.5 h5 l-2.5 3 z" fill="#222"/>
<text x="658.2" y="121.5" font-size="9.6" fill="#444" textLength="47.7" lengthAdjust="spacingAndGlyphs" >Profile Plane</text>
<text x="658.2" y="144.7" font-size="9.6" fill="#444" textLength="34.9" lengthAdjust="spacingAndGlyphs" >One Side</text>
<text x="658.2" y="167.9" font-size="9.6" fill="#444" textLength="33.1" lengthAdjust="spacingAndGlyphs" >Distance</text>
<text x="648.9" y="191" font-size="9.6" fill="#444" textLength="41" lengthAdjust="spacingAndGlyphs" >-45.00 mm</text>
<text x="648.9" y="214" font-size="9.6" fill="#444" textLength="28.2" lengthAdjust="spacingAndGlyphs" >0.0 deg</text>
<text x="658.2" y="243.9" font-size="9.6" fill="#444" textLength="12.8" lengthAdjust="spacingAndGlyphs" >Cut</text>
<path d="M647.3 112 V123.5" stroke="#16336e" stroke-width="1.4"/><path d="M648 117.7 H651.5 M650.6 116 L652.8 117.7 L650.6 119.4 Z" stroke="#222" stroke-width="0.8" fill="#222"/>
<path d="M646.5 136.2 L650 135.2 L654.6 139.2 L654.2 146 L647.6 143 Z" fill="#f29a4a" stroke="#7a3d10" stroke-width="0.8" stroke-linejoin="round"/><path d="M645.8 146 L651.5 140.3" stroke="#111" stroke-width="1.3"/><circle cx="646" cy="145.8" r="1" fill="#111"/>
<path d="M645.6 158.5 V170 M654.6 158.5 V170" stroke="#16336e" stroke-width="1.4"/><path d="M646.5 164.2 H653.8 M646.6 164.2 l1.8 -1.4 M646.6 164.2 l1.8 1.4 M653.7 164.2 l-1.8 -1.4 M653.7 164.2 l-1.8 1.4" stroke="#222" stroke-width="0.8" fill="none"/>
<rect x="647.2" y="234.6" width="5.6" height="5" fill="#fff" stroke="#2a3550" stroke-width="0.9"/><path d="M645.5 239.4 H647.5 V241 H652.6 V239.4 H654.6 V244 H645.5 Z" fill="#3f86d8" stroke="#1f3f80" stroke-width="0.8" stroke-linejoin="round"/>
<path d="M586.4 260 L590.6 263.2 L586.4 266.4 Z" fill="#222"/>
<text x="595.3" y="266.9" font-size="9.8" fill="#333" textLength="60.2" lengthAdjust="spacingAndGlyphs" font-weight="bold" >Objects To Cut</text>
<circle cx="590.7" cy="297.1" r="4.8" fill="#0a0a0a"/><rect x="590" y="296.2" width="1.5" height="3.6" fill="#fff"/><rect x="590" y="293.9" width="1.5" height="1.5" fill="#fff"/>
<rect x="795" y="290" width="39.3" height="14.5" fill="#e6e6e6" stroke="#c6c6c6" stroke-width="1"/>
<rect x="842.5" y="290" width="39.3" height="14.5" fill="#e6e6e6" stroke="#c6c6c6" stroke-width="1"/>
<text x="808" y="300.8" font-size="9.8" fill="#6a6a6a" textLength="13.6" lengthAdjust="spacingAndGlyphs" >OK</text>
<text x="847.2" y="300.8" font-size="9.8" fill="#6a6a6a" textLength="30.1" lengthAdjust="spacingAndGlyphs" >Cancel</text>
<g filter="url(#sh2)"><rect x="635" y="228.8" width="108.2" height="22" fill="none" stroke="#ee3a3d" stroke-width="1.7"/></g>
<rect x="275" y="558.6" width="181.5" height="19.4" fill="#eeeeee"/>
<path d="M293.5 566.85 h4.8 l-2.4 2.9 z" fill="#222"/>
<path d="M369.8 566.85 h4.8 l-2.4 2.9 z" fill="#222"/>
<path d="M398.4 566.85 h4.8 l-2.4 2.9 z" fill="#222"/>
<path d="M423.7 566.85 h4.8 l-2.4 2.9 z" fill="#222"/>
<path d="M448.6 566.85 h4.8 l-2.4 2.9 z" fill="#222"/>
<g fill="none" stroke="#606770" stroke-width="0.95"><ellipse cx="283.2" cy="568.3" rx="5.5" ry="2.4" transform="rotate(-14 283.2 568.3)"/><ellipse cx="283.2" cy="568.3" rx="2.3" ry="5.6" transform="rotate(8 283.2 568.3)"/></g><circle cx="283" cy="568.4" r="1.1" fill="#1f8bf0"/>
<rect x="303.4" y="566.6" width="10.4" height="7.2" rx="0.6" fill="#e6e9ec" stroke="#4f555c" stroke-width="1.1"/><rect x="305.6" y="569.2" width="6" height="2.2" fill="#f6f7f8" stroke="#4f555c" stroke-width="0.7"/><path d="M304.2 566.2 V565 L307.2 563.2 V565 L310 563.2 V565 L312.8 563.4 V566.2" stroke="#4f555c" stroke-width="0.9" fill="none"/>
<path d="M322.3 568.5 l-1.3 -2.2 l1 -0.7 l1.6 1.6 v-4 l1.2 -0.3 l0.6 3 l0.3 -3.8 l1.3 0 l0.3 3.8 l0.8 -3.2 l1.2 0.3 l-0.3 3.6 l1 -2.2 l1 0.5 l-0.9 4.4 l-1.2 3 h-4.6 z" fill="#f7f7f7" stroke="#4a4f55" stroke-width="0.8" stroke-linejoin="round"/>
<circle cx="341.3" cy="566.8" r="3.4" fill="#eef3f8" stroke="#4a4f55" stroke-width="1.1"/><path d="M343.8 569.4 L347 572.8" stroke="#33373c" stroke-width="1.8"/><path d="M346 562 v3.4 M344.3 563.7 h3.4 M344.6 567.5 h3" stroke="#33373c" stroke-width="0.8"/>
<circle cx="358.6" cy="566.8" r="3.9" fill="#eef3f8" stroke="#4a4f55" stroke-width="1.1"/><rect x="357" y="565.3" width="3.4" height="3" fill="none" stroke="#7a8088" stroke-width="0.7"/><path d="M361.4 569.8 L364.8 573.3" stroke="#33373c" stroke-width="1.9"/>
<rect x="385.2" y="562.3" width="10.6" height="8.4" rx="0.8" fill="#8d949c" stroke="#4a5058" stroke-width="0.9"/><rect x="386.8" y="563.8" width="7.4" height="5.2" fill="#9fc4f2" stroke="#4a78c0" stroke-width="0.6"/><path d="M387.6 565.8 h5.8 M387.6 567.4 h5.8" stroke="#c9defa" stroke-width="0.5"/><path d="M388 573 h5" stroke="#4a5058" stroke-width="1.5"/><path d="M390.5 570.8 v2" stroke="#4a5058" stroke-width="2.4"/>
<rect x="410.8" y="562.6" width="10" height="10.6" fill="#d5d8dc" stroke="#666b72" stroke-width="0.9"/><path d="M412.8 562.6 v10.6 M414.8 562.6 v10.6 M416.8 562.6 v10.6 M418.8 562.6 v10.6" stroke="#858b93" stroke-width="0.9"/>
<rect x="435.2" y="563" width="10.6" height="9.8" rx="0.6" fill="#5a6f96"/><rect x="436.2" y="564" width="3.9" height="3.5" fill="#9dbdea"/><rect x="440.9" y="564" width="3.9" height="3.5" fill="#9dbdea"/><rect x="436.2" y="568.3" width="3.9" height="3.5" fill="#9dbdea"/><rect x="440.9" y="568.3" width="3.9" height="3.5" fill="#9dbdea"/>
<rect x="602.4" y="559.6" width="80" height="18" fill="#ebebeb"/>
<path d="M605.5 562 v13.5 M607.5 562 v13.5" stroke="#d2d2d2" stroke-width="1" stroke-dasharray="1 1.3"/>
<rect x="619.5" y="561.2" width="53" height="14.4" fill="#ffffff" stroke="#c9c9c9" stroke-width="1"/>
<rect x="627.5" y="563.2" width="40" height="10.6" fill="#e9e9f1"/>
<text x="626" y="572" font-size="9.6" fill="#222" textLength="40.6" lengthAdjust="spacingAndGlyphs" >-45.00 mm</text>
<path d="M676.1 567.2 h5 l-2.5 3 z" fill="#222"/>
<text x="863.7" y="572.4" font-size="9.6" fill="#2e2e2e" textLength="107.8" lengthAdjust="spacingAndGlyphs" font-weight="bold" >2 Profiles | Angle : 0.0 deg</text>
<g filter="url(#sh2)" fill="#f64343"><path d="M117 87.4 L132.4 79.8 V84.6 H136.8 V90 H132.4 V94.7 Z"/><rect x="142.2" y="84.4" width="15.8" height="5.4"/><rect x="163.4" y="84.2" width="10" height="5.4"/></g>
<g filter="url(#sh)"><circle cx="191.4" cy="86" r="24.6" fill="#f64343"/></g>
<text x="191.4" y="97.6" font-size="32" fill="#ffffff" text-anchor="middle" font-family="&quot;NanumGothic&quot;,&quot;Liberation Sans&quot;,sans-serif" stroke="#fff" stroke-width="1">1</text>
<g filter="url(#sh2)" fill="#f64343" transform="translate(445.5 322) rotate(-3)"><rect x="-2.6" y="0" width="5.2" height="4"/><rect x="-2.6" y="8" width="5.2" height="15.5"/><path d="M-2.6 28.5 H2.6 V44.5 H8.4 L0 62 L-8.4 44.5 H-2.6 Z"/></g>
<g filter="url(#sh)"><circle cx="448" cy="298.5" r="24.6" fill="#f64343"/></g>
<text x="448" y="310.1" font-size="32.5" fill="#ffffff" text-anchor="middle">2</text>
<g filter="url(#sh2)" fill="#f64343"><path d="M756.8 238 L772.2 230.4 V235.3 H783.5 V240.6 H772.2 V245.4 Z"/><rect x="789.5" y="235.3" width="15.8" height="5.3"/></g>
<g filter="url(#sh)"><circle cx="834.8" cy="240" r="24.6" fill="#f64343"/></g>
<text x="834.8" y="251.6" font-size="32.5" fill="#ffffff" text-anchor="middle">3</text>
</svg>
</body></html>
